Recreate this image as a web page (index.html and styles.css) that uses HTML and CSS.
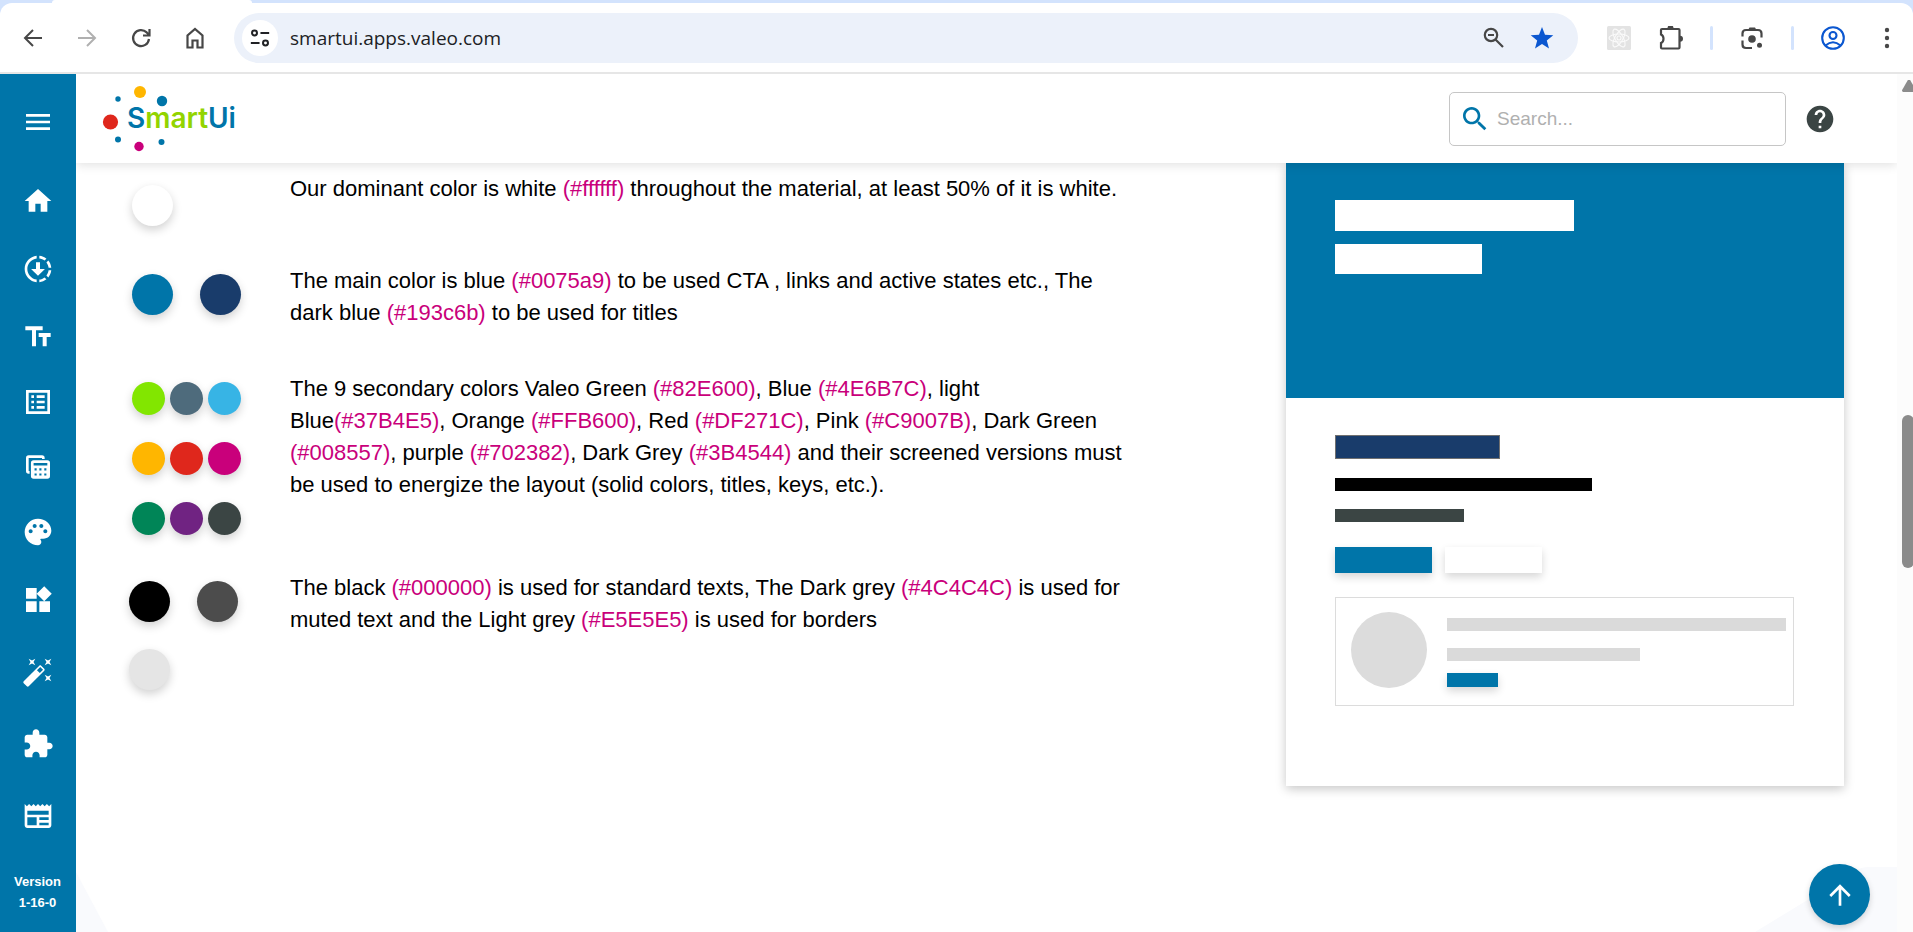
FILE: index.html
```html
<!DOCTYPE html>
<html lang="en">
<head>
<meta charset="utf-8">
<meta name="viewport" content="width=device-width, initial-scale=1">
<title>SmartUi</title>
<link rel="stylesheet" href="styles.css">
</head>
<body>
<div class="tabstrip"><div class="tab"></div></div>
<div class="toolbar">
  <div class="nav-buttons">
    <button class="tool" aria-label="Back"><svg viewBox="0 0 24 24" fill="none" stroke="#474747" stroke-width="2"><path d="M21 12H4M12 4l-8 8 8 8"/></svg></button>
    <button class="tool" aria-label="Forward"><svg viewBox="0 0 24 24" fill="none" stroke="#b0b0b0" stroke-width="2"><path d="M3 12h17M12 4l8 8-8 8"/></svg></button>
    <button class="tool" aria-label="Reload"><svg viewBox="0 0 24 24" fill="none" stroke="#474747" stroke-width="2.2"><path d="M20 13a8 8 0 1 1-2.300-6.600L20 8.800M20.500 3v6.500h-6.500"/></svg></button>
    <button class="tool" aria-label="Home"><svg viewBox="0 0 24 24" fill="none" stroke="#474747" stroke-width="2.200"><path d="M4.500 21.500v-12L12 3l7.500 6.500v12h-5v-7h-5v7z"/></svg></button>
  </div>
  <div class="address">
    <button class="site-info" aria-label="Site information"><svg viewBox="0 0 24 24" fill="none" stroke="#202124" stroke-width="2.200"><circle cx="6" cy="6.500" r="2.700"/><path d="M12.500 6.500H22M2 17.500h9.500"/><circle cx="18" cy="17.500" r="2.700"/></svg></button>
    <input class="url" type="text" value="smartui.apps.valeo.com" aria-label="Address">
    <button class="tool" aria-label="Zoom"><svg viewBox="0 0 24 24" fill="none" stroke="#474747" stroke-width="2.200"><circle cx="9" cy="9" r="6.200"/><path d="M6 9h6M13.500 13.500l7.500 7.500"/></svg></button>
    <button class="tool" aria-label="Bookmark"><svg viewBox="0 0 24 24" fill="#0b57d0"><path d="M12 1l3 7.700 8.300.5-6.500 5.200 2.200 8.100-7-4.500-7 4.500 2.200-8.100L.7 9.200 9 8.700z"/></svg></button>
  </div>
  <div class="browser-actions">
    <button class="tool" aria-label="React tools"><svg viewBox="0 0 24 24"><rect width="24" height="24" rx="1.500" fill="#e3e3e3"/><g fill="none" stroke="#fafafa" stroke-width="1.100"><ellipse cx="12" cy="12" rx="10" ry="4"/><ellipse cx="12" cy="12" rx="10" ry="4" transform="rotate(60 12 12)"/><ellipse cx="12" cy="12" rx="10" ry="4" transform="rotate(120 12 12)"/><circle cx="12" cy="12" r="2"/></g></svg></button>
    <button class="tool" aria-label="Extensions"><svg viewBox="0 0 24 24"><path d="M2 4q0-1 1-1h16.500q1 0 1 1v17.500q0 1-1 1H3q-1 0-1-1V17q2.500-1 2.500-4.200T2 8.500z" fill="none" stroke="#474747" stroke-width="2.200"/><path d="M8.500 2.200a3 3 0 0 1 6 0zM21 9.800a3 3 0 0 1 0 6z" fill="#474747"/></svg></button>
    <span class="divider"></span>
    <button class="tool" aria-label="Search with Lens"><svg viewBox="0 0 24 24"><path d="M2.500 10.500V7.500q0-3.500 3.500-3.500h12q3.500 0 3.500 3.500v4M2.500 14.500v4q0 3.500 3.500 3.500h6" fill="none" stroke="#474747" stroke-width="2.200"/><path d="M9.500 1.500h5.500l1.500 2.500H8z" fill="#474747"/><circle cx="12" cy="13" r="3.800" fill="#474747"/><circle cx="19.500" cy="19.200" r="2.500" fill="#474747"/></svg></button>
    <span class="divider"></span>
    <button class="tool" aria-label="Profile"><svg viewBox="0 0 24 24" fill="none" stroke="#0b57d0" stroke-width="2.100"><circle cx="12" cy="12" r="10.800"/><circle cx="12" cy="9.500" r="3.500"/><path d="M4.500 19.500q7.500-6.500 15 0"/></svg></button>
    <button class="tool menu" aria-label="Menu"><svg viewBox="0 0 24 24" fill="#474747"><circle cx="12" cy="4" r="2.200"/><circle cx="12" cy="12" r="2.200"/><circle cx="12" cy="20" r="2.200"/></svg></button>
  </div>
</div>

<div class="app">
  <nav class="sidebar" aria-label="Main">
    <button class="side-item toggle" aria-label="Open menu"><svg viewBox="0 0 24 24"><path d="M3 18h18v-2H3v2zm0-5h18v-2H3v2zm0-7v2h18V6H3z"/></svg></button>
    <div class="side-group">
      <a class="side-item" href="#home" aria-label="Home"><svg viewBox="0 0 24 24"><path d="M10 20v-6h4v6h5v-8h3L12 3 2 12h3v8z"/></svg></a>
      <a class="side-item" href="#start" aria-label="Getting started"><svg viewBox="0 0 24 24"><path d="M18.320 4.260C16.840 3.050 15.010 2.250 13 2.050v2.020c1.460.18 2.790.76 3.900 1.620l1.420-1.430zM19.930 11h2.020c-.2-2.010-1-3.840-2.210-5.320L18.310 7.100c.86 1.110 1.440 2.440 1.620 3.900zM18.310 16.900l1.430 1.430c1.210-1.480 2.010-3.320 2.210-5.320h-2.020c-.18 1.450-.76 2.780-1.620 3.890zM13 19.930v2.020c2.010-.2 3.840-1 5.320-2.210l-1.430-1.430c-1.100.86-2.430 1.440-3.890 1.620zM13.500 12V7h-3v5H6.800l5.200 5 5.200-5zM11 19.930v2.020c-5.050-.5-9-4.760-9-9.950s3.950-9.450 9-9.950v2.020C7.050 4.560 4 7.920 4 12s3.050 7.440 7 7.930z"/></svg></a>
      <a class="side-item" href="#type" aria-label="Typography"><svg viewBox="0 0 24 24"><path d="M2.500 4v3h5v12h3V7h5V4h-13zm19 5h-9v3h3v7h3v-7h3V9z"/></svg></a>
    </div>
    <div class="side-group lists">
      <a class="side-item" href="#forms" aria-label="Forms"><svg viewBox="0 0 24 24"><path d="M19 5v14H5V5h14m2-2H3v18h18V3zM11 7h6v2h-6V7zm0 4h6v2h-6v-2zm0 4h6v2h-6zM7 7h2v2H7zm0 4h2v2H7zm0 4h2v2H7z"/></svg></a>
      <a class="side-item" href="#tables" aria-label="Tables"><svg viewBox="0 0 24 24"><path d="M5 3.200h10q2 0 2 2V6h-2v-.8H5V15h.7v2H5q-2 0-2-2V5.200q0-2 2-2z"/><path fill-rule="evenodd" d="M8.700 7H19q2 0 2 2v9.800q0 2-2 2H8.700q-2 0-2-2V9q0-2 2-2zM8.700 9v1.800H19V9zM9.400 13v1.600H11V13zm3.600 0v1.600h1.600V13zm3.700 0v1.600h1.600V13zM9.400 16.800v1.600H11v-1.600zm3.600 0v1.600h1.600v-1.600zm3.700 0v1.600h1.600v-1.600z"/></svg></a>
      <a class="side-item" href="#colors" aria-label="Colors"><svg viewBox="0 0 24 24"><path d="M12,2C6.490,2,2,6.490,2,12s4.490,10,10,10c1.380,0,2.500-1.120,2.500-2.500c0-0.610-0.230-1.200-0.640-1.670c-0.080-0.100-0.130-0.210-0.130-0.330c0-0.280,0.220-0.500,0.500-0.500H16c3.310,0,6-2.690,6-6C22,6.040,17.510,2,12,2z M17.500,13c-0.830,0-1.500-0.670-1.500-1.500c0-0.830,0.670-1.500,1.500-1.500s1.500,0.670,1.500,1.500C19,12.330,18.330,13,17.500,13z M14.500,9C13.670,9,13,8.330,13,7.500C13,6.670,13.670,6,14.500,6S16,6.670,16,7.500C16,8.330,15.330,9,14.500,9z M5,11.500C5,10.670,5.670,10,6.500,10S8,10.670,8,11.500C8,12.330,7.330,13,6.500,13S5,12.330,5,11.500z M11,7.500C11,8.330,10.330,9,9.500,9S8,8.330,8,7.500C8,6.670,8.670,6,9.500,6S11,6.670,11,7.500z"/></svg></a>
    </div>
    <div class="side-group tools">
      <a class="side-item" href="#components" aria-label="Components"><svg viewBox="0 0 24 24"><path d="M13 13v8h8v-8h-8zM3 21h8v-8H3v8zM3 3v8h8V3H3zm13.660-1.310L11 7.340 16.660 13l5.660-5.660-5.660-5.650z"/></svg></a>
      <a class="side-item" href="#icons" aria-label="Icons"><svg viewBox="0 0 24 24"><path d="M7.500,5.600L5,7L6.400,4.500L5,2L7.500,3.400L10,2L8.600,4.500L10,7L7.500,5.600M19.500,15.400L22,14L20.600,16.500L22,19L19.500,17.600L17,19L18.400,16.500L17,14L19.500,15.400M22,2L20.600,4.500L22,7L19.500,5.600L17,7L18.400,4.500L17,2L19.500,3.400L22,2M13.340,12.780L15.780,10.340L13.660,8.220L11.220,10.660L13.340,12.780M14.370,7.290L16.710,9.630C17.100,10,17.100,10.650,16.710,11.040L5.040,22.710C4.650,23.100,4,23.100,3.630,22.710L1.290,20.370C0.900,20,0.900,19.350,1.290,18.960L12.960,7.290C13.350,6.900,14,6.900,14.370,7.290Z"/></svg></a>
      <a class="side-item" href="#plugins" aria-label="Plugins"><svg viewBox="0 0 24 24"><path d="M20.500 11H19V7c0-1.100-.9-2-2-2h-4V3.500C13 2.120 11.880 1 10.500 1S8 2.120 8 3.500V5H4c-1.100 0-1.990.9-1.990 2v3.800H3.500c1.490 0 2.700 1.210 2.700 2.700s-1.210 2.700-2.700 2.700H2V20c0 1.100.9 2 2 2h3.800v-1.500c0-1.490 1.210-2.700 2.700-2.700 1.490 0 2.700 1.210 2.700 2.700V22H17c1.100 0 2-.9 2-2v-4h1.500c1.380 0 2.500-1.120 2.500-2.500S21.880 11 20.500 11z"/></svg></a>
      <a class="side-item" href="#templates" aria-label="Templates"><svg viewBox="0 0 24 24"><path fill-rule="evenodd" d="M22,3l-1.670,1.670L18.670,3L17,4.670L15.330,3l-1.660,1.670L12,3l-1.670,1.670L8.670,3L7,4.670L5.330,3L3.670,4.670L2,3v16c0,1.100,0.900,2,2,2l16,0c1.100,0,2-0.900,2-2V3z M11,19H4v-6h7V19z M20,19h-7v-2h7V19z M20,15h-7v-2h7V15z M20,11H4V8h16V11z"/></svg></a>
    </div>
    <p class="version">Version<br>1-16-0</p>
  </nav>

  <div class="page">
    <header class="header">
      <a class="logo" href="#home" aria-label="SmartUi home">
        <svg viewBox="0 1 150 70">
          <circle cx="40" cy="9" r="6" fill="#ffb600"/><circle cx="18" cy="16" r="2.700" fill="#0075a9"/><circle cx="62" cy="18" r="5.200" fill="#0075a9"/><circle cx="10.500" cy="39" r="7.600" fill="#df271c"/><circle cx="18" cy="56.500" r="3" fill="#0075a9"/><circle cx="39" cy="63.500" r="4.700" fill="#c9007b"/><circle cx="61.500" cy="59" r="3" fill="#0075a9"/>
          <text class="logo-text" x="27" y="45">S<tspan class="logo-green">mart</tspan>Ui</text>
        </svg>
      </a>
      <label class="search">
        <svg viewBox="0 0 24 24"><path d="M15.500 14h-.79l-.28-.27C15.410 12.590 16 11.110 16 9.500 16 5.910 13.090 3 9.500 3S3 5.910 3 9.500 5.910 16 9.500 16c1.610 0 3.090-.59 4.230-1.570l.27.28v.79l5 4.990L20.490 19l-4.990-5zm-6 0C7.010 14 5 11.990 5 9.500S7.010 5 9.500 5 14 7.010 14 9.500 11.990 14 9.500 14z"/></svg>
        <input type="search" placeholder="Search..." aria-label="Search">
      </label>
      <button class="help" aria-label="Help"><svg viewBox="0 0 24 24"><path d="M12 2C6.480 2 2 6.480 2 12s4.480 10 10 10 10-4.480 10-10S17.520 2 12 2zm1 17h-2v-2h2v2zm2.070-7.750l-.9.920C13.450 12.900 13 13.500 13 15h-2v-.5c0-1.100.45-2.100 1.170-2.830l1.240-1.260c.37-.36.59-.86.59-1.410 0-1.100-.9-2-2-2s-2 .9-2 2H8c0-2.210 1.790-4 4-4s4 1.790 4 4c0 .88-.36 1.680-.93 2.250z"/></svg></button>
    </header>

    <main class="content">
      <section class="rules">
        <div class="rule first">
          <div class="swatches"><i class="dot white"></i></div>
          <p>Our dominant color is white <span class="code">(#ffffff)</span> throughout the material, at least 50% of it is white.</p>
        </div>
        <div class="rule">
          <div class="swatches"><i class="dot blue"></i><i class="dot navy"></i></div>
          <p>The main color is blue <span class="code">(#0075a9)</span> to be used CTA , links and active states etc., The dark blue <span class="code">(#193c6b)</span> to be used for titles</p>
        </div>
        <div class="rule">
          <div class="swatches small"><i class="dot green"></i><i class="dot slate"></i><i class="dot sky"></i><i class="dot orange"></i><i class="dot red"></i><i class="dot pink"></i><i class="dot forest"></i><i class="dot purple"></i><i class="dot charcoal"></i></div>
          <p>The 9 secondary colors Valeo Green <span class="code">(#82E600)</span>, Blue <span class="code">(#4E6B7C)</span>, light Blue<span class="code">(#37B4E5)</span>, Orange <span class="code">(#FFB600)</span>, Red <span class="code">(#DF271C)</span>, Pink <span class="code">(#C9007B)</span>, Dark Green <span class="code">(#008557)</span>, purple <span class="code">(#702382)</span>, Dark Grey <span class="code">(#3B4544)</span> and their screened versions must be used to energize the layout (solid colors, titles, keys, etc.).</p>
        </div>
        <div class="rule">
          <div class="swatches neutral"><i class="dot black"></i><i class="dot grey"></i><i class="dot light"></i></div>
          <p>The black <span class="code">(#000000)</span> is used for standard texts, The Dark grey <span class="code">(#4C4C4C)</span> is used for muted text and the Light grey <span class="code">(#E5E5E5)</span> is used for borders</p>
        </div>
      </section>

      <section class="preview" aria-label="Layout preview">
        <div class="hero"><div class="hero-title"></div><div class="hero-sub"></div></div>
        <div class="preview-body">
          <div class="bar title"></div>
          <div class="bar text"></div>
          <div class="bar muted"></div>
          <div class="ctas"><div class="cta"></div><div class="cta plain"></div></div>
          <div class="media">
            <div class="avatar"></div>
            <div class="media-lines"><div class="line"></div><div class="line short"></div><div class="link-bar"></div></div>
          </div>
        </div>
      </section>
    </main>
    <svg class="decor left" viewBox="0 0 32 60"><path d="M0 0l32 60H0z"/></svg>
    <svg class="decor right" viewBox="0 0 142 65"><path d="M0 65L100 4q6-4 14-4h28v65z"/></svg>
    <button class="to-top" aria-label="Back to top"><svg viewBox="0 0 24 24"><path d="M4 12l1.410 1.410L11 7.830V20h2V7.830l5.580 5.590L20 12l-8-8-8 8z"/></svg></button>
  </div>
  <div class="scrollbar"><span class="arrow"></span><span class="thumb"></span></div>
</div>
</body>
</html>
```

FILE: styles.css
```css
* { box-sizing: border-box; }
body {
  margin: 0;
  height: 100vh;
  display: flex;
  flex-direction: column;
  overflow: hidden;
  background: #d3e3fd;
  font-family: "Liberation Sans", Arial, sans-serif;
  color: #000;
}
button { padding: 0; border: 0; background: none; }
svg { display: block; }
p { margin: 0; }

/* Browser bar */
.tabstrip { height: 3px; padding-left: 52px; flex: none; }
.tab { width: 200px; height: 3px; background: #fff; border-radius: 3px 3px 0 0; }
.toolbar {
  flex: none;
  height: 71px;
  padding: 0 13px 0 20px;
  display: flex;
  align-items: center;
  background: #fff;
  border-bottom: 2px solid #e6e6e6;
  border-radius: 12px 12px 0 0;
}
.nav-buttons { display: flex; gap: 28px; margin-right: 26px; }
.tool { width: 26px; height: 26px; flex: none; }
.tool svg { width: 24px; height: 24px; margin: auto; }
.address {
  flex: 1;
  height: 50px;
  display: flex;
  align-items: center;
  gap: 22px;
  padding: 0 23px 0 8px;
  border-radius: 25px;
  background: #ecf1fa;
}
.site-info { width: 36px; height: 36px; border-radius: 50%; background: #fff; flex: none; }
.site-info svg { width: 22px; height: 22px; margin: auto; }
.url {
  flex: 1;
  min-width: 0;
  margin-left: -10px;
  padding: 0;
  border: 0;
  outline: 0;
  background: none;
  font: 19px "Open Sans", sans-serif;
  color: #202124;
}
.browser-actions { display: flex; align-items: center; gap: 26px; margin-left: 28px; }
.divider { width: 3px; height: 24px; border-radius: 2px; background: #d3e3fd; }
.browser-actions .menu { margin-left: 2px; }

/* Application frame */
.app { flex: 1; min-height: 0; display: flex; background: #fff; }
.sidebar {
  flex: none;
  width: 76px;
  padding-top: 32px;
  padding-right: 1px;
  display: flex;
  flex-direction: column;
  align-items: center;
  background: #0075a9;
  color: #fff;
}
.side-item { display: block; width: 32px; height: 32px; flex: none; }
.side-item svg { width: 32px; height: 32px; fill: #fff; }
.toggle { margin-bottom: 47px; }
.side-group { display: flex; flex-direction: column; gap: 36px; margin-bottom: 33px; }
.side-group.lists { gap: 33px; margin-bottom: 36px; }
.side-group.tools { gap: 40px; }
.version { font-size: 13px; line-height: 21px; font-weight: bold; text-align: center; margin-top: 6px; }

.page { flex: 1; min-width: 0; position: relative; overflow: hidden; }
.header {
  position: relative;
  z-index: 2;
  height: 89px;
  padding: 0 61px 0 24px;
  display: flex;
  align-items: center;
  background: #fff;
  box-shadow: 0 2px 10px rgba(0, 0, 0, 0.12);
}
.logo { margin-right: auto; }
.logo svg { width: 150px; height: 70px; }
.logo-text { font: 600 28px Inter, sans-serif; fill: #0075a9; }
.logo-green { fill: #92d400; }
.search {
  width: 337px;
  height: 54px;
  padding: 0 12px 0 9px;
  display: flex;
  align-items: center;
  gap: 6px;
  border: 1px solid #c6c6c6;
  border-radius: 5px;
}
.search svg { width: 32px; height: 32px; fill: #0075a9; flex: none; }
.search input {
  flex: 1;
  min-width: 0;
  padding: 0;
  border: 0;
  outline: 0;
  background: none;
  font: 19px "Liberation Sans", Arial, sans-serif;
}
.search input::placeholder { color: #b0b0b0; }
.help { width: 32px; height: 32px; margin-left: 18px; }
.help svg { width: 32px; height: 32px; fill: #3b4544; }

.content {
  position: relative;
  z-index: 1;
  display: grid;
  grid-template-columns: minmax(0, 995fr) minmax(0, 558fr);
  gap: 159px;
  align-items: start;
  padding: 0 53px 0 56px;
}

/* Color rules */
.rules { padding-top: 10px; }
.rule { display: flex; padding-bottom: 37px; }
.rule p { flex: 1; margin-bottom: 7px; font-size: 22px; line-height: 32px; }
.code { color: #c9007b; }
.swatches {
  width: 158px;
  padding-top: 9px;
  display: flex;
  flex-wrap: wrap;
  align-content: flex-start;
  gap: 27px;
  padding-right: 20px;
}
.rule.first { padding-bottom: 39px; }
.first .swatches { padding-top: 12px; }
.swatches.small { gap: 27px 5px; padding-right: 40px; }
.swatches.neutral { margin-left: -3px; margin-right: 3px; }
.dot { width: 41px; height: 41px; border-radius: 50%; box-shadow: 0 4px 10px rgba(0, 0, 0, 0.18); }
.small .dot { width: 33px; height: 33px; }
.white { background: #fff; }
.blue { background: #0075a9; }
.navy { background: #193c6b; }
.green { background: #82e600; }
.slate { background: #4e6b7c; }
.sky { background: #37b4e5; }
.orange { background: #ffb600; }
.red { background: #df271c; }
.pink { background: #c9007b; }
.forest { background: #008557; }
.purple { background: #702382; }
.charcoal { background: #3b4544; }
.black { background: #000; }
.grey { background: #4c4c4c; }
.light { background: #e5e5e5; }

/* Layout preview */
.preview { background: #fff; box-shadow: 0 3px 10px rgba(0, 0, 0, 0.22); }
.hero { height: 235px; padding: 37px 49px; background: #0075a9; }
.hero-title { width: 52%; height: 31px; margin-bottom: 13px; background: #fff; }
.hero-sub { width: 32%; height: 30px; background: #fff; }
.preview-body { padding: 37px 50px 80px 49px; }
.bar { height: 13px; margin-bottom: 18px; }
.bar.title { width: 36%; height: 24px; margin-bottom: 19px; background: #193c6b; border: 1px solid #707070; }
.bar.text { width: 56%; background: #000; }
.bar.muted { width: 28%; margin-bottom: 25px; background: #3b4544; }
.ctas { display: flex; gap: 13px; margin-bottom: 24px; }
.cta { width: 97px; height: 26px; background: #0075a9; box-shadow: 0 4px 8px rgba(0, 0, 0, 0.16); }
.cta.plain { background: #fff; }
.media { display: flex; align-items: flex-start; gap: 20px; padding: 14px 7px 17px 15px; border: 1px solid #dcdcdc; }
.avatar { width: 76px; height: 76px; border-radius: 50%; background: #dcdcdc; flex: none; }
.media-lines { flex: 1; padding-top: 6px; }
.line { height: 13px; margin-bottom: 17px; background: #dadada; }
.line.short { width: 57%; margin-bottom: 12px; }
.link-bar { width: 51px; height: 14px; background: #0075a9; box-shadow: 0 4px 8px rgba(0, 0, 0, 0.16); }

/* Overlays */
.decor { position: absolute; bottom: 0; fill: #f9fafd; }
.decor.left { left: 0; width: 32px; height: 60px; }
.decor.right { right: 0; width: 142px; height: 65px; }
.to-top {
  position: absolute;
  z-index: 3;
  right: 27px;
  bottom: 7px;
  width: 61px;
  height: 61px;
  border-radius: 50%;
  background: #0075a9;
  box-shadow: 0 3px 6px rgba(0, 0, 0, 0.16);
}
.to-top svg { width: 32px; height: 32px; margin: auto; fill: #fff; }
.scrollbar {
  flex: none;
  width: 16px;
  padding: 6px 0 0 5px;
  display: flex;
  flex-direction: column;
  overflow: hidden;
  background: #fcfcfc;
}
.arrow { width: 14px; height: 12px; flex: none; background: #8b8b8b; clip-path: polygon(42% 0, 58% 0, 100% 85%, 95% 100%, 5% 100%, 0 85%); }
.thumb { width: 12px; height: 153px; flex: none; margin-top: 323px; border-radius: 6px; background: #8b8b8b; }
```
